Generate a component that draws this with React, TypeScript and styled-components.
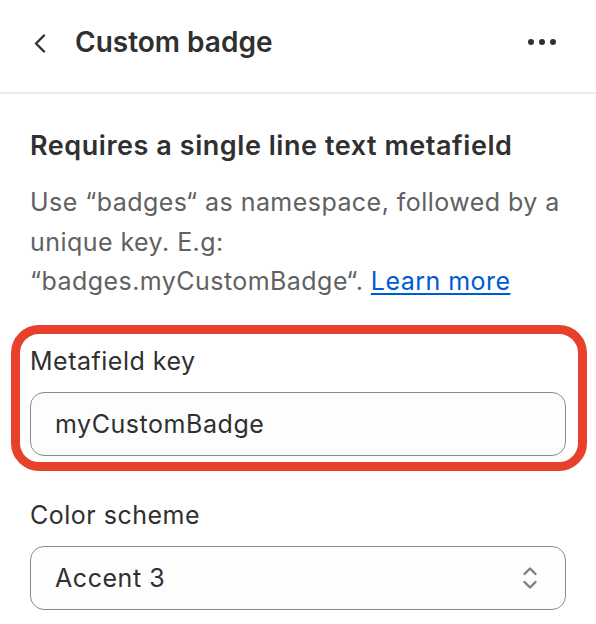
import React from 'react';
import styled, { createGlobalStyle } from 'styled-components';

const GlobalStyle = createGlobalStyle`
  * {
    box-sizing: border-box;
  }
  body {
    margin: 0;
    background: #ffffff;
    font-family: Inter, "Noto Sans", "Liberation Sans", sans-serif;
    color: #303030;
  }
`;

const BackIcon = () => (
  <svg width="12" height="19" viewBox="0 0 12 19" fill="none">
    <path d="M10 1.5L2 9.5L10 17.5" stroke="#303030" strokeWidth="2.4" strokeLinecap="round" strokeLinejoin="round" />
  </svg>
);

const SelectArrows = () => (
  <svg width="16" height="26" viewBox="0 0 16 26" fill="none">
    <path d="M2.5 9L8 3.5L13.5 9" stroke="#7f7f7f" strokeWidth="2.4" strokeLinecap="round" strokeLinejoin="round" />
    <path d="M2.5 17L8 22.5L13.5 17" stroke="#7f7f7f" strokeWidth="2.4" strokeLinecap="round" strokeLinejoin="round" />
  </svg>
);

const App: React.FC = () => {
  return (
    <>
      <GlobalStyle />
      <Panel>
        <Header>
          <BackButton aria-label="Back">
            <BackIcon />
          </BackButton>
          <Title>Custom badge</Title>
          <MoreButton aria-label="More">
            <Dot />
            <Dot />
            <Dot />
          </MoreButton>
        </Header>

        <Content>
          <Heading>Requires a single line text metafield</Heading>
          <Description>
            Use “badges“ as namespace, followed by a unique key. E.g:
            <br />
            “badges.myCustomBadge“. <Link href="#">Learn more</Link>
          </Description>

          <Highlight>
            <Field>
              <Label>Metafield key</Label>
              <Input>myCustomBadge</Input>
            </Field>
          </Highlight>

          <Field $spaced>
            <Label>Color scheme</Label>
            <Select>
              <span>Accent 3</span>
              <SelectArrows />
            </Select>
          </Field>
        </Content>
      </Panel>
    </>
  );
};

const Panel = styled.div`
  width: 596px;
  min-height: 624px;
  background: #ffffff;
`;

const Header = styled.div`
  height: 94px;
  display: flex;
  align-items: center;
  padding: 0 40px 8px 34px;
  border-bottom: 2px solid #ebebeb;
`;

const BackButton = styled.div`
  display: flex;
  align-items: center;
  width: 41px;
  margin-top: 2px;
`;

const Title = styled.div`
  flex: 1;
  font-size: 28px;
  font-weight: 600;
  color: #303030;
`;

const MoreButton = styled.div`
  display: flex;
  gap: 5px;
  align-items: center;
`;

const Dot = styled.span`
  width: 6px;
  height: 6px;
  border-radius: 50%;
  background: #303030;
`;

const Content = styled.div`
  padding: 34px 30px 0 30px;
`;

const Heading = styled.div`
  font-size: 27px;
  line-height: 36px;
  font-weight: 600;
  letter-spacing: 0.55px;
  color: #303030;
`;

const Description = styled.div`
  margin-top: 19px;
  font-size: 25px;
  line-height: 39.5px;
  letter-spacing: 0.45px;
  color: #616161;
`;

const Link = styled.a`
  color: #005bd3;
  text-decoration: underline;
  text-underline-offset: 3px;
  text-decoration-thickness: 2px;
`;

const Highlight = styled.div`
  margin: 23px -21px 0 -19px;
  padding: 11px 12px 6px 10px;
  border: 9px solid #e8412b;
  border-radius: 28px;
`;

const Field = styled.div<{ $spaced?: boolean }>`
  display: flex;
  flex-direction: column;
  gap: 15px;
  margin-top: ${(p) => (p.$spaced ? '28px' : '0')};
`;

const Label = styled.div`
  font-size: 25px;
  line-height: 32px;
  letter-spacing: 0.5px;
  color: #303030;
`;

const Input = styled.div`
  height: 64px;
  display: flex;
  align-items: center;
  padding: 0 24px;
  border: 1px solid #8a8a8a;
  border-radius: 14px;
  background: #fdfdfd;
  font-size: 25px;
  letter-spacing: 0.55px;
  color: #303030;
`;

const Select = styled(Input)`
  justify-content: space-between;
  padding-right: 27px;
`;

export default App;
